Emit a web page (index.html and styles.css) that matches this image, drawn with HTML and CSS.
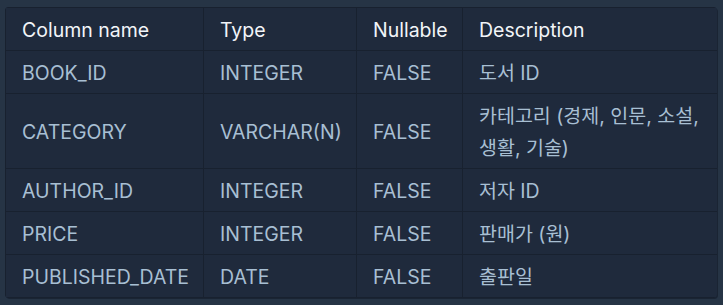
FILE: index.html
```html
<!DOCTYPE html>
<html>
<head>
<meta charset="utf-8">
<title>BOOK table</title>
<link rel="stylesheet" href="styles.css">
</head>
<body>
<div class="table-wrap">
<table class="schema">
  <thead>
    <tr>
      <th class="col-name">Column name</th>
      <th class="col-type">Type</th>
      <th class="col-null">Nullable</th>
      <th class="col-desc">Description</th>
    </tr>
  </thead>
  <tbody>
    <tr><td>BOOK_ID</td><td>INTEGER</td><td>FALSE</td><td>도서 ID</td></tr>
    <tr><td>CATEGORY</td><td>VARCHAR(N)</td><td>FALSE</td><td>카테고리 (경제, 인문, 소설, 생활, 기술)</td></tr>
    <tr><td>AUTHOR_ID</td><td>INTEGER</td><td>FALSE</td><td>저자 ID</td></tr>
    <tr><td>PRICE</td><td>INTEGER</td><td>FALSE</td><td>판매가 (원)</td></tr>
    <tr><td>PUBLISHED_DATE</td><td>DATE</td><td>FALSE</td><td>출판일</td></tr>
  </tbody>
</table>
</div>
</body>
</html>
```
FILE: styles.css
```css
body {
   margin: 0;
   padding: 7px 6px 6px 5px;
   background-color: #263445;
   font-family: Inter, "Noto Sans CJK KR", sans-serif;
   font-size: 19.5px;
}

.table-wrap {
   background-color: #1f2a3c;
   border-radius: 4px;
   box-shadow: 1px 1px 0 #1a2433;
   overflow: hidden;
}

.schema {
   width: 100%;
   border-collapse: collapse;
   table-layout: fixed;
}

.schema th,
.schema td {
   box-sizing: border-box;
   text-align: left;
   padding: 6px 14px 4px 16px;
   line-height: 32px;
   border: 1px solid #18212f;
}

.schema th:last-child,
.schema td:last-child {
   border-right: none;
}

.schema th {
   color: #f2f5f8;
   font-weight: 400;
}

.schema td {
   color: #a8bfd3;
}

.col-name { width: 198px; }
.col-type { width: 153px; }
.col-null { width: 106px; }
```
